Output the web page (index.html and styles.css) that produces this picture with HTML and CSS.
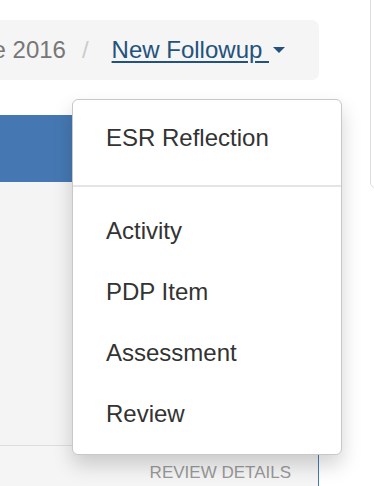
FILE: index.html
```html
<!DOCTYPE html>
<html>

<head>
    <title>New Followup</title>
    <link rel="stylesheet" href="styles.css">
</head>

<body>
    <div id="page">
        <div class="row">
            <div class="main">
                <ol class="breadcrumb">
                    <li class="crumb">Assessment June 2016</li>
                    <li class="sep">/</li>
                    <li class="crumb dropdown">
                        <a href="#" class="toggle">New Followup&nbsp;</a><span class="caret"></span>
                    </li>
                </ol>
                <div class="panel">
                    <div class="panel-heading"></div>
                    <div class="panel-body"></div>
                    <div class="panel-footer">Review details</div>
                </div>
            </div>
            <div class="side">
                <div class="side-panel"></div>
            </div>
        </div>

        <ul class="dropdown-menu">
            <li><a href="#">ESR Reflection</a></li>
            <li class="divider"></li>
            <li><a href="#">Activity</a></li>
            <li><a href="#">PDP Item</a></li>
            <li><a href="#">Assessment</a></li>
            <li><a href="#">Review</a></li>
        </ul>
    </div>
</body>

</html>
```

FILE: styles.css
```css
body {
    margin: 0;
    background-color: #fff;
    font-family: "Liberation Sans", Arial, sans-serif;
    color: #333;
}

#page {
    position: relative;
    width: 374px;
    height: 486px;
    overflow: hidden;
}

.row {
    display: flex;
}

.main {
    flex: none;
    width: 400px;
    margin-left: -81px;
}

.side {
    flex: none;
    width: 200px;
    margin-left: 51px;
}

/* breadcrumb */
.breadcrumb {
    display: flex;
    align-items: center;
    justify-content: flex-end;
    height: 60px;
    margin: 20px 0 0 0;
    padding: 0 34px 0 0;
    list-style: none;
    background-color: #f5f5f5;
    border-radius: 7px;
    font-size: 24px;
    white-space: nowrap;
}

.crumb {
    color: #777;
}

.sep {
    color: #ccc;
    margin: 0 23px 0 16px;
}

.dropdown {
    display: flex;
    align-items: center;
}

.toggle {
    color: #23527c;
    text-decoration: underline;
    text-underline-offset: 3px;
}

.caret {
    width: 0;
    height: 0;
    margin-left: 4px;
    border-top: 6px solid #23527c;
    border-left: 6px solid transparent;
    border-right: 6px solid transparent;
}

/* panel */
.panel {
    margin-top: 35px;
    border: 1px solid #4578b2;
    border-radius: 4px;
    overflow: hidden;
}

.panel-heading {
    height: 66px;
    background-color: #4578b2;
}

.panel-body {
    height: 263px;
    background-color: #f4f4f4;
}

.panel-footer {
    padding: 15px 27px 15px 0;
    border-top: 1px solid #ddd;
    background-color: #f5f5f5;
    color: #999;
    font-size: 17px;
    line-height: 24px;
    text-transform: uppercase;
    text-align: right;
}

.side-panel {
    height: 196px;
    margin-top: -10px;
    border: 1px solid #ddd;
    border-radius: 5px;
}

/* dropdown */
.dropdown-menu {
    position: absolute;
    top: 99px;
    left: 72px;
    box-sizing: border-box;
    width: 270px;
    margin: 0;
    padding: 7px 0 10px 0;
    list-style: none;
    background-color: #fff;
    border: 1px solid #c8c8c8;
    border-radius: 6px;
    box-shadow: 0 10px 20px rgba(0, 0, 0, .175);
}

.dropdown-menu a {
    display: block;
    padding: 13px 33px;
    font-size: 24px;
    line-height: 35px;
    color: #333;
    text-decoration: none;
}

.divider {
    height: 2px;
    margin: 17px 0 13px 0;
    background-color: #e5e5e5;
}
```
